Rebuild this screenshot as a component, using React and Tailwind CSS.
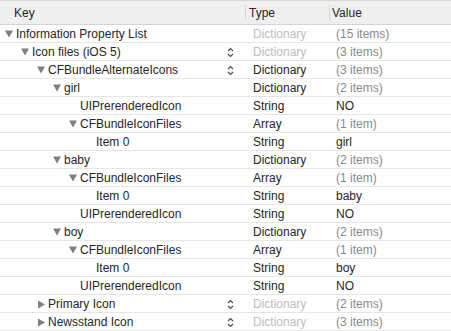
import React from "react";

const rows = [
  { level: 0, key: "Information Property List", exp: "down", type: "Dictionary", typeDim: true, value: "(15 items)", valDim: true },
  { level: 1, key: "Icon files (iOS 5)", exp: "down", step: true, type: "Dictionary", typeDim: true, value: "(3 items)", valDim: true },
  { level: 2, key: "CFBundleAlternateIcons", exp: "down", step: true, type: "Dictionary", value: "(3 items)", valDim: true },
  { level: 3, key: "girl", exp: "down", type: "Dictionary", value: "(2 items)", valDim: true },
  { level: 4, key: "UIPrerenderedIcon", type: "String", value: "NO" },
  { level: 4, key: "CFBundleIconFiles", exp: "down", type: "Array", value: "(1 item)", valDim: true },
  { level: 5, key: "Item 0", type: "String", value: "girl" },
  { level: 3, key: "baby", exp: "down", type: "Dictionary", value: "(2 items)", valDim: true },
  { level: 4, key: "CFBundleIconFiles", exp: "down", type: "Array", value: "(1 item)", valDim: true },
  { level: 5, key: "Item 0", type: "String", value: "baby" },
  { level: 4, key: "UIPrerenderedIcon", type: "String", value: "NO" },
  { level: 3, key: "boy", exp: "down", type: "Dictionary", value: "(2 items)", valDim: true },
  { level: 4, key: "CFBundleIconFiles", exp: "down", type: "Array", value: "(1 item)", valDim: true },
  { level: 5, key: "Item 0", type: "String", value: "boy" },
  { level: 4, key: "UIPrerenderedIcon", type: "String", value: "NO" },
  { level: 2, key: "Primary Icon", exp: "right", step: true, type: "Dictionary", typeDim: true, value: "(2 items)", valDim: true },
  { level: 2, key: "Newsstand Icon", exp: "right", step: true, type: "Dictionary", typeDim: true, value: "(3 items)", valDim: true },
];

const indent = ["pl-[5px]", "pl-[21px]", "pl-[37px]", "pl-[53px]", "pl-[69px]", "pl-[85px]"];

function Disclosure({ dir }) {
  if (dir === "down") {
    return (
      <svg width="11" height="8" viewBox="0 0 11 8" className="shrink-0">
        <path d="M0 0.5 L8 0.5 L4 7.5 Z" fill="#7f7f7f" />
      </svg>
    );
  }
  if (dir === "right") {
    return (
      <svg width="11" height="9" viewBox="0 0 11 9" className="shrink-0">
        <path d="M1 0.5 L8 4.5 L1 8.5 Z" fill="#7f7f7f" />
      </svg>
    );
  }
  return <span className="inline-block w-[11px] shrink-0" />;
}

function Stepper() {
  return (
    <svg width="7" height="11" viewBox="0 0 7 11" className="ml-auto mr-[11px] shrink-0">
      <path d="M1 4 L3.5 1.5 L6 4" fill="none" stroke="#4a4a4a" strokeWidth="1.1" />
      <path d="M1 7 L3.5 9.5 L6 7" fill="none" stroke="#4a4a4a" strokeWidth="1.1" />
    </svg>
  );
}

export default function App() {
  return (
    <div
      className="w-[451px] h-[331px] overflow-hidden bg-white text-[12px] text-[#262626]"
      style={{ fontFamily: '"Liberation Sans", Arial, sans-serif' }}
    >
      <div className="grid grid-cols-[245px_84px_1fr] h-[25px] bg-[#efefef] border-t border-t-[#d6d6d6] border-b border-b-[#d4d4d4]">
        <div className="flex items-center pl-[14px]">Key</div>
        <div className="flex items-center">
          <span className="w-px h-[15px] bg-[#d5d5d5]" />
          <span className="pl-[3px]">Type</span>
        </div>
        <div className="flex items-center">
          <span className="w-px h-[15px] bg-[#d5d5d5]" />
          <span className="pl-[2px]">Value</span>
        </div>
      </div>
      {rows.map((r, i) => (
        <div
          key={i}
          className="grid grid-cols-[245px_84px_1fr] h-[18px] border-b border-b-[#e6e6e6]"
        >
          <div className={"flex items-center " + indent[r.level]}>
            <Disclosure dir={r.exp} />
            <span className="whitespace-nowrap">{r.key}</span>
            {r.step ? <Stepper /> : null}
          </div>
          <div className={"flex items-center pl-[8px] " + (r.typeDim ? "text-[#bdbdbd]" : "")}>
            {r.type}
          </div>
          <div className={"flex items-center pl-[7px] " + (r.valDim ? "text-[#8a8a8a]" : "")}>
            {r.value}
          </div>
        </div>
      ))}
    </div>
  );
}
